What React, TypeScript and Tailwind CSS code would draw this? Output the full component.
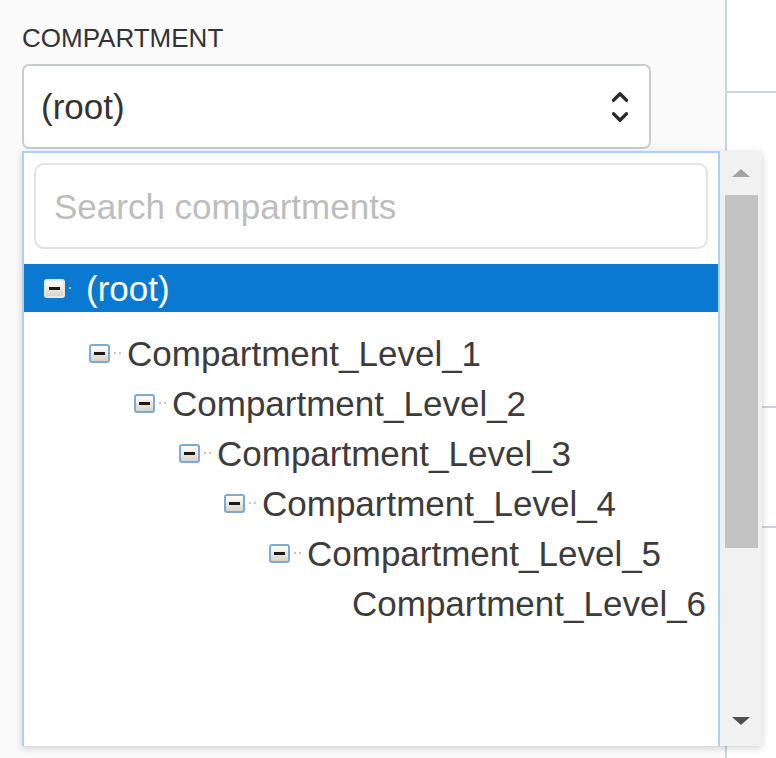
import { ChevronUp, ChevronDown } from "lucide-react";

interface TreeNode {
  label: string;
  indent: string;
  hasToggle: boolean;
}

const nodes: TreeNode[] = [
  { label: "Compartment_Level_1", indent: "pl-[65px]", hasToggle: true },
  { label: "Compartment_Level_2", indent: "pl-[110px]", hasToggle: true },
  { label: "Compartment_Level_3", indent: "pl-[155px]", hasToggle: true },
  { label: "Compartment_Level_4", indent: "pl-[200px]", hasToggle: true },
  { label: "Compartment_Level_5", indent: "pl-[245px]", hasToggle: true },
  { label: "Compartment_Level_6", indent: "pl-[290px]", hasToggle: false },
];

function ToggleBox({ selected }: { selected?: boolean }) {
  return (
    <span
      className={
        "flex h-[19px] w-[21px] shrink-0 items-center justify-center rounded-[3px] border-2 bg-gradient-to-b from-white to-[#d9d3c7] " +
        (selected ? "border-[#ece8e0]" : "border-[#7eaad0]")
      }
    >
      <span className="h-[3px] w-[11px] bg-[#1a1a1a]" />
    </span>
  );
}

function Connector({ light }: { light?: boolean }) {
  return (
    <span className={"flex shrink-0 items-center gap-[3px] pl-[4px] " + (light ? "w-[21px]" : "w-[17px]")}>
      <span className={"h-[2px] w-[2px] " + (light ? "bg-[#9cc6ec]" : "bg-[#c4c4c4]")} />
      <span className={"h-[2px] w-[2px] " + (light ? "bg-transparent" : "bg-[#c4c4c4]")} />
    </span>
  );
}

export default function App() {
  return (
    <div className="flex h-[758px] w-[776px] overflow-hidden bg-white font-['Liberation_Sans',Arial,sans-serif]">
      <div className="relative w-[727px] shrink-0 border-r-2 border-[#ccd5de] bg-[#fafafa] pl-[22px] pt-[24px]">
        <div className="text-[26px] leading-[28px] text-[#333]">COMPARTMENT</div>

        <div className="mt-[12px] flex h-[85px] w-[629px] items-center justify-between rounded-[7px] border-2 border-[#c6ccd2] bg-white pl-[17px] pr-[16px]">
          <span className="text-[35px] leading-none text-[#333]">(root)</span>
          <span className="flex flex-col items-center text-[#2a2a2a]">
            <ChevronUp size={26} strokeWidth={3} className="-mb-[6px]" />
            <ChevronDown size={26} strokeWidth={3} />
          </span>
        </div>

        <div className="absolute left-[22px] top-[151px] z-10 flex h-[595px] w-[740px] bg-white shadow-[0_2px_7px_rgba(0,0,0,0.18)]">
          <div className="flex w-[698px] flex-col border-2 border-b-0 border-[#a9d2f8] pt-[10px]">
            <div className="mx-[10px] flex h-[86px] items-center rounded-[10px] border-2 border-[#e2e2e2] pl-[18px]">
              <span className="text-[35px] leading-none text-[#bdbdbd]">Search compartments</span>
            </div>

            <div className="mt-[15px] flex h-[48px] items-center bg-[#0a79d2] pl-[20px]">
              <ToggleBox selected />
              <Connector light />
              <span className="text-[35px] leading-none text-white">(root)</span>
            </div>

            <div className="h-[16px]" />

            {nodes.map((node) => (
              <div key={node.label} className={"flex h-[50px] items-center " + node.indent}>
                {node.hasToggle ? (
                  <>
                    <ToggleBox />
                    <Connector />
                  </>
                ) : (
                  <span className="w-[38px] shrink-0" />
                )}
                <span className="text-[35px] leading-none text-[#3c3c3c]">{node.label}</span>
              </div>
            ))}
          </div>

          <div className="flex w-[42px] flex-col items-center bg-[#f1f1f1]">
            <div className="flex h-[44px] items-center justify-center">
              <span className="h-0 w-0 border-x-[9px] border-b-[8px] border-x-transparent border-b-[#a3a3a3]" />
            </div>
            <div className="h-[353px] w-[33px] bg-[#c3c3c3]" />
            <div className="flex-1" />
            <div className="flex h-[50px] items-center justify-center">
              <span className="h-0 w-0 border-x-[9px] border-t-[8px] border-x-transparent border-t-[#505050]" />
            </div>
          </div>
        </div>
      </div>

      <div className="flex flex-1 flex-col">
        <div className="h-[93px] border-b-2 border-[#ccd5de]" />
        <div className="h-[315px] border-b-2 border-[#ccd5de]" />
        <div className="h-[120px] border-b-2 border-[#ccd5de]" />
      </div>
    </div>
  );
}
